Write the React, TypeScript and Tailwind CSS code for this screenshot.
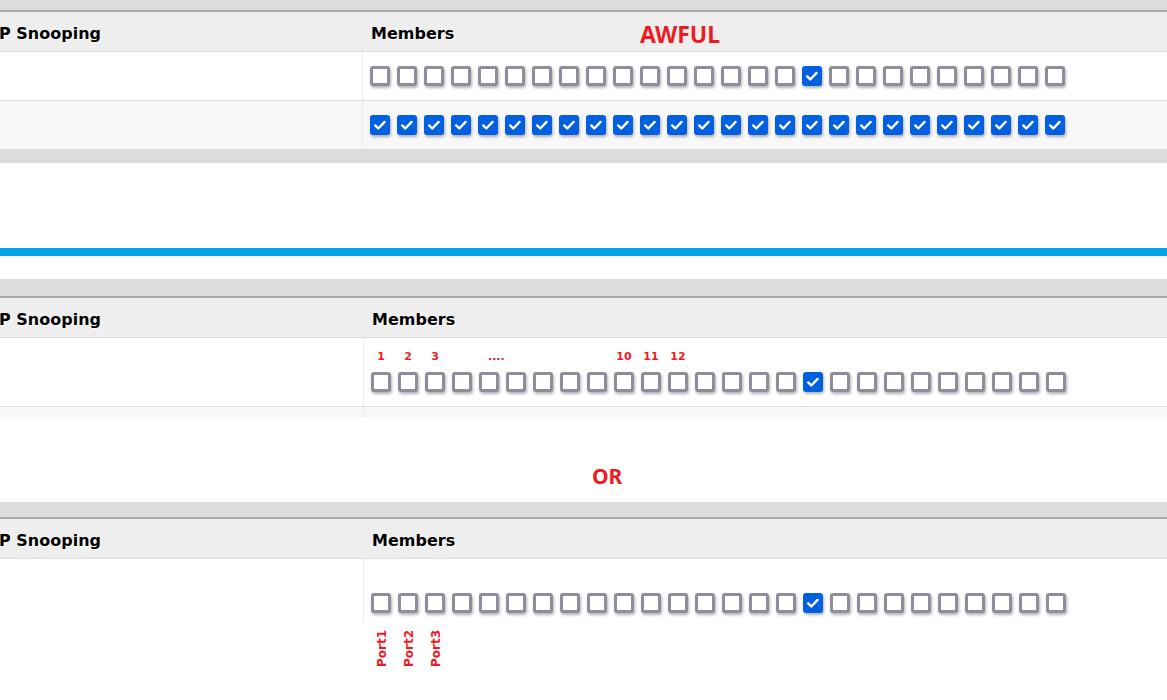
import React from 'react';

const RED = 'text-[#ed1c24]';

const Box: React.FC<{ checked?: boolean }> = ({ checked }) =>
  checked ? (
    <span className="w-5 h-5 shrink-0 rounded-[3px] bg-[#0060df] shadow-[1px_2px_3px_rgba(0,0,0,0.3)] flex items-center justify-center">
      <svg viewBox="0 0 20 20" className="w-5 h-5">
        <path
          d="M5.2 10.4l3.1 3.1 6.3-6.6"
          stroke="white"
          strokeWidth="2.4"
          fill="none"
          strokeLinecap="round"
          strokeLinejoin="round"
        />
      </svg>
    </span>
  ) : (
    <span className="w-5 h-5 shrink-0 rounded-[3px] border-[3px] border-[#8f8d9c] bg-white shadow-[1px_2px_3px_rgba(0,0,0,0.3)]" />
  );

const Boxes: React.FC<{ checkedAll?: boolean }> = ({ checkedAll }) => (
  <div className="flex gap-[7px]">
    {Array.from({ length: 26 }).map((_, i) => (
      <Box key={i} checked={checkedAll || i === 16} />
    ))}
  </div>
);

const Band: React.FC<{ h: string }> = ({ h }) => (
  <div className={`${h} bg-[#dcdcdc] border-b-2 border-[#a9a9a9]`} />
);

const Header: React.FC<{ col: string; children?: React.ReactNode }> = ({ col, children }) => (
  <div
    className="relative flex items-center h-[40px] pt-[4px] bg-[#eeeeee] border-b border-[#dcdcdc] font-bold text-[16px] text-black [text-shadow:1px_1px_0_#ffffff]"
    style={{ fontFamily: '"DejaVu Sans", Verdana, sans-serif' }}
  >
    <div className={`${col} overflow-hidden whitespace-nowrap`}>
      <span className="-ml-[36px] inline-block">IGMP Snooping</span>
    </div>
    <span>Members</span>
    {children}
  </div>
);

export default function App() {
  const labelFont = { fontFamily: '"DejaVu Sans", Verdana, sans-serif' };
  const numbers: Record<number, string> = { 0: '1', 1: '2', 2: '3', 4: '....', 9: '10', 10: '11', 11: '12' };

  return (
    <div className="w-[1167px] h-[700px] bg-white overflow-hidden">
      {/* first table */}
      <Band h="h-[12px]" />
      <Header col="w-[371px]">
        <span
          className={`absolute left-[640px] top-[5px] text-[23px] font-bold ${RED} [text-shadow:none]`}
          style={{ fontFamily: '"Noto Sans", "Open Sans", sans-serif' }}
        >
          AWFUL
        </span>
      </Header>
      <div className="flex h-[49px] bg-white border-b border-[#dcdcdc]">
        <div className="w-[363px] border-r border-[#ebebeb]" />
        <div className="flex items-center pl-[7px]">
          <Boxes />
        </div>
      </div>
      <div className="flex h-[48px] bg-[#f8f8f8]">
        <div className="w-[363px] border-r border-[#ebebeb]" />
        <div className="flex items-center pl-[7px]">
          <Boxes checkedAll />
        </div>
      </div>
      <div className="h-[14px] bg-[#dcdcdc]" />

      <div className="h-[85px]" />
      <div className="h-[8px] bg-[#00a3e6]" />
      <div className="h-[23px]" />

      {/* second table */}
      <Band h="h-[19px]" />
      <Header col="w-[372px]" />
      <div className="flex bg-white border-b border-[#dcdcdc]">
        <div className="w-[364px] border-r border-[#ebebeb]" />
        <div className="pl-[7px] pt-[13px] pb-[14px]">
          <div className="flex gap-[7px] h-[12px] mb-[9px] text-[11px] leading-[12px] font-bold" style={labelFont}>
            {Array.from({ length: 26 }).map((_, i) => (
              <span
                key={i}
                className={`w-5 shrink-0 whitespace-nowrap ${RED} ${i === 4 ? 'pl-[9px] text-left' : 'text-center'}`}
              >
                {numbers[i] ?? ''}
              </span>
            ))}
          </div>
          <Boxes />
        </div>
      </div>
      <div className="flex h-[10px] bg-[#f8f8f8]">
        <div className="w-[364px] border-r border-[#ebebeb]" />
      </div>

      <div className="h-[85px] flex justify-start">
        <span
          className={`ml-[592px] mt-[47px] text-[21px] leading-[24px] font-bold ${RED}`}
          style={{ fontFamily: '"Noto Sans", "Open Sans", sans-serif' }}
        >
          OR
        </span>
      </div>

      {/* third table */}
      <Band h="h-[17px]" />
      <Header col="w-[372px]" />
      <div className="flex bg-white">
        <div className="w-[364px] border-r border-[#ebebeb]" />
        <div className="pl-[7px] pt-[34px] pb-[10px]">
          <Boxes />
        </div>
      </div>
      <div className="flex gap-[7px] pl-[372px] mt-[7px]">
        {['Port1', 'Port2', 'Port3'].map((p) => (
          <span key={p} className="w-5 flex justify-center">
            <span
              className={`[writing-mode:vertical-rl] rotate-180 text-[12px] leading-[13px] font-bold ${RED}`}
              style={labelFont}
            >
              {p}
            </span>
          </span>
        ))}
      </div>
    </div>
  );
}
